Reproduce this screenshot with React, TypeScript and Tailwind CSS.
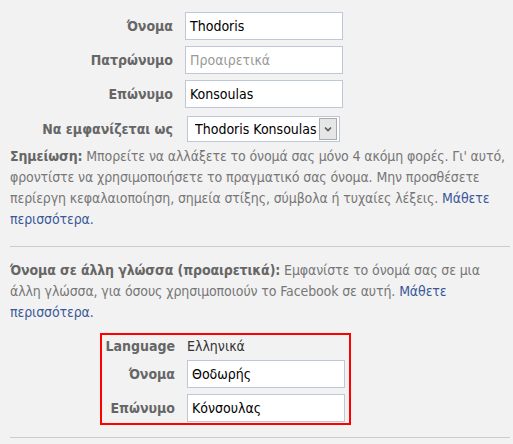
import React from "react";

const font = { fontFamily: "'DejaVu Sans Condensed', 'DejaVu Sans', sans-serif" };

function Field({ label, value, placeholder }: { label: string; value?: string; placeholder?: string }) {
  return (
    <div className="flex items-center h-[28px]">
      <div className="w-[173px] flex-none text-right font-bold text-[#666666]">{label}</div>
      <div className="ml-[12px] w-[158px] h-[28px] flex items-center border border-[#bdc7d8] bg-white pl-[4px]">
        {value ? <span className="text-black">{value}</span> : <span className="text-[#999999]">{placeholder}</span>}
      </div>
    </div>
  );
}

export default function App() {
  return (
    <div
      className="w-[513px] h-[444px] overflow-hidden bg-[#f2f2f2] text-[14px] leading-[21px] font-stretch-condensed"
      style={font}
    >
      <div className="pt-[12px]">
        <Field label="Όνομα" value="Thodoris" />
        <div className="mt-[6px]">
          <Field label="Πατρώνυμο" placeholder="Προαιρετικά" />
        </div>
        <div className="mt-[6px]">
          <Field label="Επώνυμο" value="Konsoulas" />
        </div>
        <div className="mt-[8px] flex items-center h-[26px]">
          <div className="w-[173px] flex-none text-right font-bold text-[#666666]">Να εμφανίζεται ως</div>
          <div className="ml-[14px] w-[153px] h-[26px] flex items-center border border-[#bdc7d8] bg-white pl-[7px] pr-[2px]">
            <span className="flex-1 text-black whitespace-nowrap overflow-hidden">Thodoris Konsoulas</span>
            <div className="w-[18px] h-[22px] flex-none flex items-center justify-center border border-[#acacac] bg-[#e6e6e6]">
              <svg width="8" height="6" viewBox="0 0 8 6">
                <path d="M1 1.5 L4 4.5 L7 1.5" fill="none" stroke="#555555" strokeWidth="1.6" />
              </svg>
            </div>
          </div>
        </div>
      </div>

      <div className="px-[10px]">
        <div className="mt-[4px] text-[#777777] whitespace-nowrap tracking-[-0.12px]">
          <div>
            <span className="font-bold text-[#666666]">Σημείωση:</span> Μπορείτε να αλλάξετε το όνομά σας μόνο 4 ακόμη φορές. Γι' αυτό,
          </div>
          <div>φροντίστε να χρησιμοποιήσετε το πραγματικό σας όνομα. Μην προσθέσετε</div>
          <div>
            περίεργη κεφαλαιοποίηση, σημεία στίξης, σύμβολα ή τυχαίες λέξεις.{" "}
            <span className="text-[#3b5998]">Μάθετε</span>
          </div>
          <div className="text-[#3b5998]">περισσότερα.</div>
        </div>

        <div className="mt-[16px] h-px w-[500px] bg-[#cccccc]" />

        <div className="mt-[13px] text-[#777777] whitespace-nowrap tracking-[-0.12px]">
          <div>
            <span className="font-bold text-[#666666]">Όνομα σε άλλη γλώσσα (προαιρετικά):</span> Εμφανίστε το όνομά σας σε μια
          </div>
          <div>
            άλλη γλώσσα, για όσους χρησιμοποιούν το Facebook σε αυτή.{" "}
            <span className="text-[#3b5998]">Μάθετε</span>
          </div>
          <div className="text-[#3b5998]">περισσότερα.</div>
        </div>

        <div className="mt-[10px] ml-[90px] w-[251px] h-[92px] border-2 border-[#ff0000] pt-[1px]">
          <div className="flex items-center h-[20px]">
            <div className="w-[73px] flex-none text-right font-bold text-[#666666]">Language</div>
            <div className="ml-[12px] text-[#333333]">Ελληνικά</div>
          </div>
          <div className="mt-[4px] flex items-center h-[28px]">
            <div className="w-[73px] flex-none text-right font-bold text-[#666666]">Όνομα</div>
            <div className="ml-[12px] w-[158px] h-[28px] flex items-center border border-[#bdc7d8] bg-white pl-[4px] text-black">
              Θοδωρής
            </div>
          </div>
          <div className="mt-[6px] flex items-center h-[28px]">
            <div className="w-[73px] flex-none text-right font-bold text-[#666666]">Επώνυμο</div>
            <div className="ml-[12px] w-[158px] h-[28px] flex items-center border border-[#bdc7d8] bg-white pl-[4px] text-black">
              Κόνσουλας
            </div>
          </div>
        </div>

        <div className="mt-[12px] h-px w-[500px] bg-[#cccccc]" />
      </div>
    </div>
  );
}
